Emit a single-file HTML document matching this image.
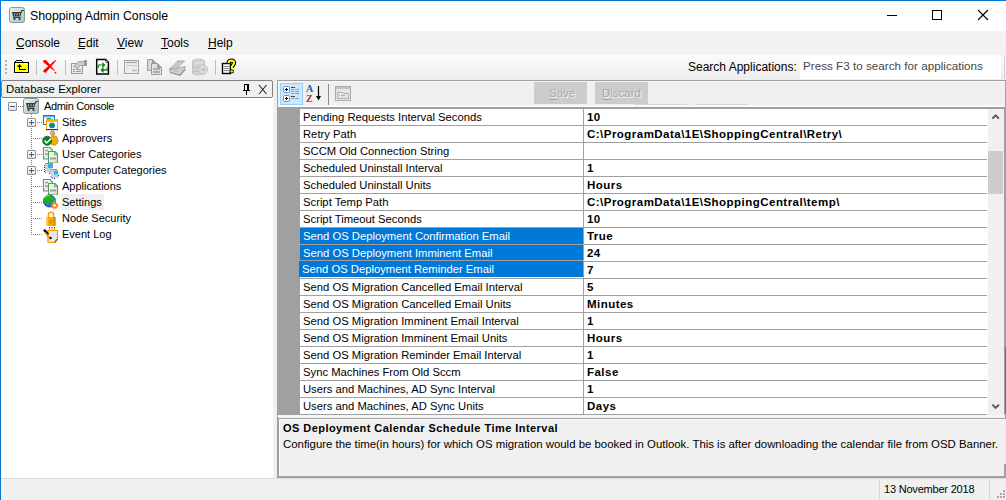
<!DOCTYPE html>
<html><head><meta charset="utf-8">
<style>
*{box-sizing:border-box;margin:0;padding:0}
html,body{width:1006px;height:500px;overflow:hidden;background:#f0f0f0;font-family:"Liberation Sans",sans-serif;color:#000}
.a{position:absolute}
.t{position:absolute;white-space:nowrap;line-height:16px}
.g{position:absolute;white-space:nowrap;line-height:16px;font-size:11.25px}
.tr{position:absolute;white-space:nowrap;line-height:16px;font-size:11px}
.b{font-weight:bold;font-size:11.5px;letter-spacing:0.47px}
u{text-decoration:none;border-bottom:1px solid #000;display:inline-block;line-height:12px}
</style></head><body>
<!-- window border -->
<div class="a" style="left:0;top:0;width:1006px;height:1px;background:#0078d7"></div>
<div class="a" style="left:0;top:0;width:1px;height:500px;background:#0078d7"></div>
<!-- title bar -->
<div class="a" style="left:1px;top:1px;width:1005px;height:30px;background:#fff"></div>
<div id="title" class="t" style="left:30px;top:8px;font-size:12.3px">Shopping Admin Console</div>
<!-- menu bar -->
<div class="a" style="left:1px;top:31px;width:1005px;height:24px;background:#f2f2f2"></div>
<div class="t" style="left:16px;top:35px;font-size:12px">Console</div><div class="a" style="left:16px;top:48px;width:8px;height:1px;background:#000"></div>
<div class="t" style="left:78px;top:35px;font-size:12px">Edit</div><div class="a" style="left:78px;top:48px;width:7px;height:1px;background:#000"></div>
<div class="t" style="left:117px;top:35px;font-size:12px">View</div><div class="a" style="left:117px;top:48px;width:8px;height:1px;background:#000"></div>
<div class="t" style="left:161px;top:35px;font-size:12px">Tools</div><div class="a" style="left:161px;top:48px;width:7px;height:1px;background:#000"></div>
<div class="t" style="left:208px;top:35px;font-size:12px">Help</div><div class="a" style="left:208px;top:48px;width:8px;height:1px;background:#000"></div>
<!-- toolbar -->
<div class="a" style="left:1px;top:55px;width:1005px;height:25px;background:linear-gradient(#fbfbfb,#ededed)"></div>
<div class="a" style="left:273px;top:80px;width:4px;height:1px;background:#f0f0f0"></div>
<div class="t" style="left:688px;top:59px;font-size:12px">Search Applications:</div>
<div class="a" style="left:800px;top:56px;width:201px;height:23px;background:#fff"></div>
<div class="t" style="left:803px;top:58px;font-size:11.7px;color:#464646">Press F3 to search for applications</div>
<!-- left panel -->
<!--PANELBG-->
<div class="a" style="left:1px;top:81px;width:272px;height:397px;background:#fff"></div>
<div class="a" style="left:1px;top:80px;width:272px;height:18px;background:#f0f0f0;border:1px solid #828282;border-radius:2px"></div>
<div class="t" style="left:6px;top:81px;font-size:11.44px">Database Explorer</div>
<!-- right panel -->
<div class="a" style="left:277px;top:80px;width:729px;height:397px;border:1px solid #a0a0a0;background:#f0f0f0"></div>
<!-- grid -->
<div class="a" style="left:278px;top:105px;width:726px;height:2px;background:#fafafa"></div>
<div class="a" style="left:278px;top:81px;width:726px;height:1px;background:#f7f7f7"></div>
<div class="a" style="left:278px;top:107px;width:726px;height:2px;background:#a0a0a0"></div>
<div class="a" style="left:278px;top:109px;width:22px;height:306px;background:#a0a0a0"></div>
<div id="grid" class="a" style="left:300px;top:109px;width:688px;height:306px;background:#fff"></div>
<div class="a" style="left:300px;top:125px;width:687px;height:1px;background:#a0a0a0"></div>
<div class="g" style="left:303px;top:109px;color:#000">Pending Requests Interval Seconds</div>
<div class="g b" style="left:587px;top:109px">10</div>
<div class="a" style="left:300px;top:142px;width:687px;height:1px;background:#a0a0a0"></div>
<div class="g" style="left:303px;top:126px;color:#000">Retry Path</div>
<div class="g b" style="left:587px;top:126px">C:\ProgramData\1E\ShoppingCentral\Retry\</div>
<div class="a" style="left:300px;top:159px;width:687px;height:1px;background:#a0a0a0"></div>
<div class="g" style="left:303px;top:143px;color:#000">SCCM Old Connection String</div>
<div class="a" style="left:300px;top:176px;width:687px;height:1px;background:#a0a0a0"></div>
<div class="g" style="left:303px;top:160px;color:#000">Scheduled Uninstall Interval</div>
<div class="g b" style="left:587px;top:160px">1</div>
<div class="a" style="left:300px;top:193px;width:687px;height:1px;background:#a0a0a0"></div>
<div class="g" style="left:303px;top:177px;color:#000">Scheduled Uninstall Units</div>
<div class="g b" style="left:587px;top:177px">Hours</div>
<div class="a" style="left:300px;top:210px;width:687px;height:1px;background:#a0a0a0"></div>
<div class="g" style="left:303px;top:194px;color:#000">Script Temp Path</div>
<div class="g b" style="left:587px;top:194px">C:\ProgramData\1E\ShoppingCentral\temp\</div>
<div class="a" style="left:300px;top:227px;width:687px;height:1px;background:#a0a0a0"></div>
<div class="g" style="left:303px;top:211px;color:#000">Script Timeout Seconds</div>
<div class="g b" style="left:587px;top:211px">10</div>
<div class="a" style="left:300px;top:228px;width:283px;height:16px;background:#0078d7"></div>
<div class="a" style="left:300px;top:244px;width:687px;height:1px;background:#a0a0a0"></div>
<div class="g" style="left:303px;top:228px;color:#fff">Send OS Deployment Confirmation Email</div>
<div class="g b" style="left:587px;top:228px">True</div>
<div class="a" style="left:300px;top:245px;width:283px;height:15px;background:#0078d7"></div>
<div class="a" style="left:300px;top:260px;width:283px;height:1px;background:#a0a0a0"></div>
<div class="a" style="left:584px;top:261px;width:403px;height:1px;background:#a0a0a0"></div>
<div class="g" style="left:303px;top:245px;color:#fff">Send OS Deployment Imminent Email</div>
<div class="g b" style="left:587px;top:245px">24</div>
<div class="a" style="left:299px;top:261px;width:284px;height:16px;background:#0078d7"></div>
<div class="a" style="left:300px;top:278px;width:687px;height:1px;background:#a0a0a0"></div>
<div class="g" style="left:302px;top:261px;color:#fff">Send OS Deployment Reminder Email</div>
<div class="g b" style="left:587px;top:262px">7</div>
<div class="a" style="left:300px;top:295px;width:687px;height:1px;background:#a0a0a0"></div>
<div class="g" style="left:303px;top:279px;color:#000">Send OS Migration Cancelled Email Interval</div>
<div class="g b" style="left:587px;top:279px">5</div>
<div class="a" style="left:300px;top:312px;width:687px;height:1px;background:#a0a0a0"></div>
<div class="g" style="left:303px;top:296px;color:#000">Send OS Migration Cancelled Email Units</div>
<div class="g b" style="left:587px;top:296px">Minutes</div>
<div class="a" style="left:300px;top:329px;width:687px;height:1px;background:#a0a0a0"></div>
<div class="g" style="left:303px;top:313px;color:#000">Send OS Migration Imminent Email Interval</div>
<div class="g b" style="left:587px;top:313px">1</div>
<div class="a" style="left:300px;top:346px;width:687px;height:1px;background:#a0a0a0"></div>
<div class="g" style="left:303px;top:330px;color:#000">Send OS Migration Imminent Email Units</div>
<div class="g b" style="left:587px;top:330px">Hours</div>
<div class="a" style="left:300px;top:363px;width:687px;height:1px;background:#a0a0a0"></div>
<div class="g" style="left:303px;top:347px;color:#000">Send OS Migration Reminder Email Interval</div>
<div class="g b" style="left:587px;top:347px">1</div>
<div class="a" style="left:300px;top:380px;width:687px;height:1px;background:#a0a0a0"></div>
<div class="g" style="left:303px;top:364px;color:#000">Sync Machines From Old Sccm</div>
<div class="g b" style="left:587px;top:364px">False</div>
<div class="a" style="left:300px;top:397px;width:687px;height:1px;background:#a0a0a0"></div>
<div class="g" style="left:303px;top:381px;color:#000">Users and Machines, AD Sync Interval</div>
<div class="g b" style="left:587px;top:381px">1</div>
<div class="a" style="left:300px;top:414px;width:687px;height:1px;background:#a0a0a0"></div>
<div class="g" style="left:303px;top:398px;color:#000">Users and Machines, AD Sync Units</div>
<div class="g b" style="left:587px;top:398px">Days</div>
<div class="a" style="left:583px;top:109px;width:1px;height:306px;background:#a0a0a0"></div>
<!-- scrollbar -->
<div class="a" style="left:988px;top:109px;width:16px;height:306px;background:#f0f0f0"></div>
<div class="a" style="left:988px;top:151px;width:15px;height:43px;background:#cdcdcd"></div>
<div class="a" style="left:1004px;top:107px;width:2px;height:308px;background:#a0a0a0"></div>
<!-- description -->
<div class="a" style="left:278px;top:415px;width:726px;height:3px;background:#f5f5f5"></div><div class="a" style="left:277px;top:418px;width:729px;height:60px;border-top:1px solid #a0a0a0;border-left:2px solid #a0a0a0;border-bottom:2px solid #a0a0a0;background:#f0f0f0;box-shadow:inset 1px 1px 0 #fafafa"></div>
<div class="t" style="left:283px;top:420px;font-size:11px;font-weight:bold;letter-spacing:0.45px">OS Deployment Calendar Schedule Time Interval</div>
<div class="t" style="left:283px;top:436px;font-size:11.4px">Configure the time(in hours) for which OS migration would be booked in Outlook. This is after downloading the calendar file from OSD Banner.</div>
<!-- status bar -->
<div class="a" style="left:1px;top:478px;width:1005px;height:1px;background:#dadada"></div>
<div class="a" style="left:879px;top:480px;width:1px;height:19px;background:#d6d6d6"></div>
<div class="a" style="left:989px;top:480px;width:1px;height:19px;background:#d6d6d6"></div>
<div class="t" style="left:884px;top:481px;font-size:11px;letter-spacing:-0.2px">13 November 2018</div>
<!-- window controls -->
<div class="a" style="left:887px;top:15px;width:10px;height:1px;background:#000"></div>
<div class="a" style="left:932px;top:10px;width:10px;height:10px;border:1px solid #000"></div>
<svg class="a" style="left:977px;top:9px" width="12" height="12" viewBox="0 0 12 12"><path d="M1 1L11 11M11 1L1 11" stroke="#000" stroke-width="1.1"/></svg>
<!-- app icon -->
<svg class="a" style="left:9px;top:7px" width="16" height="16" viewBox="0 0 16 16">
<defs><linearGradient id="ag" x1="0" y1="0" x2="1" y2="1"><stop offset="0" stop-color="#e9f2f2"/><stop offset="1" stop-color="#a7c3c3"/></linearGradient></defs>
<rect x="0.5" y="0.5" width="15" height="15" rx="2" fill="url(#ag)" stroke="#7e9e9e"/>
<path d="M3 5h9.5l-1 4.5h-7.5z" fill="#3a3a3a"/>
<path d="M5.5 6v2.5M8 6v2.5M10.5 6v2.5" stroke="#b8cccc" stroke-width="0.8"/>
<path d="M12 5.5l1-2h2" stroke="#3a3a3a" stroke-width="1.2" fill="none"/>
<path d="M4.5 9.5v1h7" stroke="#3a3a3a" fill="none"/>
<circle cx="5.5" cy="12" r="1.1" fill="#2a2a2a"/><circle cx="10.5" cy="12" r="1.1" fill="#2a2a2a"/>
</svg>
<!-- toolbar grip -->
<div class="a" style="left:5px;top:60px;width:2px;height:2px;background:#b0b0b0"></div>
<div class="a" style="left:5px;top:64px;width:2px;height:2px;background:#b0b0b0"></div>
<div class="a" style="left:5px;top:68px;width:2px;height:2px;background:#b0b0b0"></div>
<div class="a" style="left:5px;top:72px;width:2px;height:2px;background:#b0b0b0"></div>
<!-- separators -->
<div class="a" style="left:36px;top:60px;width:1px;height:15px;background:#bdbdbd"></div>
<div class="a" style="left:65px;top:60px;width:1px;height:15px;background:#bdbdbd"></div>
<div class="a" style="left:117px;top:60px;width:1px;height:15px;background:#bdbdbd"></div>
<div class="a" style="left:215px;top:60px;width:1px;height:15px;background:#bdbdbd"></div>
<!-- folder up -->
<svg class="a" style="left:13px;top:59px" width="17" height="15" viewBox="0 0 17 15" shape-rendering="crispEdges">
<defs><pattern id="dy" width="2" height="2" patternUnits="userSpaceOnUse"><rect width="2" height="2" fill="#ffff00"/><rect x="1" y="0" width="1" height="1" fill="#fff"/><rect x="0" y="1" width="1" height="1" fill="#fff"/></pattern></defs>
<rect x="2" y="4" width="13" height="9" fill="url(#dy)"/>
<rect x="3" y="2" width="6" height="1" fill="url(#dy)"/>
<rect x="3" y="1" width="6" height="1" fill="#000"/>
<rect x="2" y="2" width="1" height="1" fill="#000"/><rect x="9" y="2" width="1" height="1" fill="#000"/>
<rect x="1" y="3" width="15" height="1" fill="#000"/>
<rect x="1" y="3" width="1" height="11" fill="#000"/><rect x="15" y="3" width="1" height="11" fill="#000"/>
<rect x="1" y="13" width="15" height="1" fill="#000"/>
<path d="M6.5 5L4 8h5z" fill="#000" shape-rendering="auto"/>
<rect x="6" y="7" width="1" height="4" fill="#000"/>
<rect x="6" y="10" width="7" height="1" fill="#000"/>
</svg>
<!-- red X -->
<svg class="a" style="left:42px;top:59px" width="16" height="16" viewBox="0 0 16 16">
<path d="M1.2 1.3L4 1.1L12.9 11.4L12.3 12L1.4 3.3z" fill="#f00"/>
<circle cx="13.5" cy="13.6" r="0.9" fill="#f00"/>
<path d="M13.3 1L14 1.7L3.6 14L1.3 12.8L1.3 11.4z" fill="#f00"/>
</svg>
<!-- properties (grey) -->
<svg class="a" style="left:70px;top:59px" width="18" height="16" viewBox="0 0 18 16">
<rect x="1.5" y="4.5" width="11" height="10" fill="#ececec" stroke="#9a9a9a"/>
<path d="M3 10.5h2M6 10.5h5M3 12.5h2M6 12.5h5" stroke="#9a9a9a"/>
<path d="M3.5 7.5l5-5h6v4h-4l-3 3z" fill="#c8c8c8" stroke="#a5a5a5"/>
<rect x="14" y="1" width="3" height="6" fill="#9a9a9a"/>
</svg>
<!-- refresh doc -->
<svg class="a" style="left:95px;top:58px" width="16" height="18" viewBox="0 0 16 18">
<path d="M1.7 1.6H11L13.4 4V16H1.7Z" fill="#fff" stroke="#000" stroke-width="1.5"/>
<path d="M10.5 1.5L13.5 4.5V1.5z" fill="#fff"/>
<path d="M10.8 1.8L13.4 4.4" stroke="#000" stroke-width="1.3"/>
<circle cx="11.6" cy="3.6" r="0.9" fill="#fff" stroke="#000" stroke-width="0.6"/>
<path d="M3.3 9.8V7H7.8" stroke="#0a8a0a" stroke-width="1.3" fill="none" stroke-dasharray="2.2 0.8"/>
<path d="M7.3 4L10.5 7L7.3 10z" fill="#0a8a0a"/>
<path d="M12.2 9.2V12H8" stroke="#0a8a0a" stroke-width="1.3" fill="none"/>
<path d="M8.6 9L5.3 12L8.6 15z" fill="#0a8a0a"/>
</svg>
<!-- window (grey) -->
<svg class="a" style="left:124px;top:60px" width="15" height="14" viewBox="0 0 15 14">
<rect x="0.5" y="0.5" width="14" height="13" fill="#ececec" stroke="#a3a3a3"/>
<path d="M2 2.5h11" stroke="#aaa" stroke-width="1.2"/><path d="M2 5.5h11" stroke="#c8c8c8"/>
<path d="M8 10.5h5" stroke="#bbb" stroke-width="1.5"/>
</svg>
<!-- copy (grey) -->
<svg class="a" style="left:146px;top:58px" width="17" height="18" viewBox="0 0 17 18">
<path d="M1.5 1.5h5l3 3v8h-8z" fill="#d6d6d6" stroke="#9c9c9c"/>
<path d="M6.5 1.5v3h3z" fill="#a5a5a5" stroke="#9c9c9c"/>
<path d="M3 6h2M3 9h4" stroke="#eee"/>
<path d="M5.5 5.5h6l4 4v7h-10z" fill="#e2e2e2" stroke="#9c9c9c"/>
<path d="M11.5 5.5v4h4z" fill="#a5a5a5" stroke="#9c9c9c"/>
<rect x="7" y="10" width="7" height="2" fill="#ababab"/><rect x="7" y="13" width="7" height="2" fill="#ababab"/>
</svg>
<!-- scanner (grey) -->
<svg class="a" style="left:168px;top:58px" width="19" height="18" viewBox="0 0 19 18">
<path d="M1.5 11l8-8h7l-7.5 7.5z" fill="#c9c9c9" stroke="#a3a3a3"/>
<path d="M2.5 9.5l6.5-6M16 4l-6 6" stroke="#e2e2e2" stroke-width="0.8"/>
<path d="M1.5 11.5l7.5-1 8-2v3.5l-5 5.5-9.5-3z" fill="#d2d2d2" stroke="#a3a3a3"/>
<path d="M2 14.5l10 2.5 5-5.5" stroke="#9a9a9a" stroke-width="1.2" fill="none"/>
<path d="M6 13h5M13 12h2" stroke="#b5b5b5"/>
</svg>
<!-- database (grey) -->
<svg class="a" style="left:191px;top:58px" width="19" height="18" viewBox="0 0 19 18">
<path d="M1.5 3c0-2.5 12-2.5 12 0v12c0 2.5-12 2.5-12 0z" fill="#d3d3d3" stroke="#c3c3c3"/>
<path d="M1.5 8c0 2 12 2 12 0M1.5 12c0 2 12 2 12 0" stroke="#bdbdbd" fill="none"/>
<path d="M3 4.5c2 1 7 1 9 0" stroke="#e8e8e8" fill="none"/>
<circle cx="12" cy="11.5" r="4.5" fill="#dedede" stroke="#c0c0c0"/>
<path d="M9.5 11.5h4M12 9.5l2 2-2 2" stroke="#b8b8b8" fill="none"/>
</svg>
<!-- help -->
<svg class="a" style="left:221px;top:58px" width="17" height="17" viewBox="0 0 17 17">
<rect x="1.5" y="5.5" width="8" height="10" fill="#fff" stroke="#000" stroke-width="1.4"/>
<path d="M3 8.5h5M3 10.5h5M3 12.5h5" stroke="#8a8a8a"/>
<path d="M7.5 5C8 1.8 13.5 1.8 13 5.2C12.7 7 10.6 7.5 10.6 10" stroke="#000" stroke-width="4.2" fill="none"/>
<path d="M7.5 5C8 1.8 13.5 1.8 13 5.2C12.7 7 10.6 7.5 10.6 10" stroke="#ff0" stroke-width="2.1" fill="none"/>
<rect x="8.6" y="11.6" width="4" height="3.6" fill="#000"/>
<rect x="9.5" y="12.4" width="2.3" height="2" fill="#ff0"/>
</svg>
<!-- left panel header icons -->
<svg class="a" style="left:242px;top:84px" width="9" height="11" viewBox="0 0 9 11" shape-rendering="crispEdges">
<rect x="2" y="0" width="5" height="1" fill="#000"/>
<rect x="2" y="1" width="1" height="5" fill="#000"/>
<rect x="5" y="1" width="2" height="5" fill="#000"/>
<rect x="1" y="6" width="7" height="1" fill="#000"/>
<rect x="4" y="7" width="1" height="4" fill="#000"/>
</svg>
<svg class="a" style="left:258px;top:84px" width="10" height="11" viewBox="0 0 10 11">
<path d="M1 1L8.5 10M8.5 1L1 10" stroke="#1e1e1e" stroke-width="1.05"/>
</svg>
<!-- right panel toolbar -->
<div class="a" style="left:280px;top:83px;width:23px;height:22px;background:#cce8ff;border:1px solid #99d1ff"></div>
<svg class="a" style="left:283px;top:86px" width="18" height="16" viewBox="0 0 18 16">
<rect x="0.5" y="0.5" width="6" height="6" rx="1" fill="#fff" stroke="#5a96dc"/>
<rect x="2" y="3" width="3" height="1" fill="#000"/><rect x="3" y="2" width="1" height="3" fill="#000"/>
<rect x="0.5" y="9.5" width="6" height="6" rx="1" fill="#fff" stroke="#5a96dc"/>
<rect x="2" y="12" width="3" height="1" fill="#000"/><rect x="3" y="11" width="1" height="3" fill="#000"/>
<path d="M8 1.5h4M8 10.5h4" stroke="#444"/>
<path d="M8 3.5h2M12 3.5h2M8 5.5h2M12 5.5h2M8 7.5h2M12 7.5h2M8 12.5h2M12 12.5h2" stroke="#a898c8"/>
<path d="M10 3.5h1M14 3.5h2M10 5.5h1M14 5.5h2M10 7.5h1M14 7.5h2M10 12.5h1M14 12.5h2" stroke="#60a898"/>
</svg>
<div class="a" style="left:306px;top:85px;font-family:'Liberation Serif',serif;font-weight:bold;font-size:10px;line-height:8px;color:#2a4fc0">A</div>
<div class="a" style="left:306px;top:94px;font-family:'Liberation Serif',serif;font-weight:bold;font-size:10px;line-height:9px;color:#b03030">Z</div>
<svg class="a" style="left:313px;top:85px" width="10" height="17" viewBox="0 0 10 17">
<path d="M5.5 1v12" stroke="#000" stroke-width="1.2"/>
<path d="M3 11l2.5 4.5 2.5-4.5z" fill="#000"/>
</svg>
<div class="a" style="left:328px;top:84px;width:1px;height:21px;background:#8a8a8a"></div>
<svg class="a" style="left:334px;top:85px" width="18" height="17" viewBox="0 0 18 17">
<rect x="1.5" y="1.5" width="15" height="14" fill="#e6e6e6" stroke="#aaa"/>
<path d="M2 3h14" stroke="#bbb" stroke-width="1.5"/>
<path d="M3.5 7.5h5l1 1h5v5h-11z" fill="none" stroke="#b0b0b0"/>
<path d="M5 10.5h1M7 10.5h4" stroke="#aaa"/>
</svg>
<!-- Save / Discard -->
<div class="a" style="left:534px;top:82px;width:53px;height:22px;background:#cccccc"></div>
<div class="a" style="left:595px;top:82px;width:53px;height:22px;background:#cccccc"></div>
<div class="t" style="left:549px;top:85px;font-size:11.5px;color:#a8a8a8;text-shadow:1px 1px 0 #f4f4f4">Save</div>
<div class="a" style="left:549px;top:99px;width:8px;height:1px;background:#a8a8a8"></div>
<div class="t" style="left:602px;top:85px;font-size:11.5px;color:#a8a8a8;text-shadow:1px 1px 0 #f4f4f4">Discard</div>
<div class="a" style="left:602px;top:99px;width:9px;height:1px;background:#a8a8a8"></div>
<div class="a" style="left:634px;top:104px;width:53px;height:1px;background:#d6d6d6"></div>
<div class="a" style="left:695px;top:104px;width:53px;height:1px;background:#d6d6d6"></div>
<!-- scroll arrows -->
<svg class="a" style="left:991px;top:112px" width="10" height="8" viewBox="0 0 10 8"><path d="M1.3 6.6L4.6 3.3L7.9 6.6" stroke="#5a5a5a" stroke-width="2" fill="none"/></svg>
<svg class="a" style="left:991px;top:403px" width="10" height="8" viewBox="0 0 10 8"><path d="M1.3 1.6L4.6 4.9L7.9 1.6" stroke="#5a5a5a" stroke-width="2" fill="none"/></svg>
<!-- size grip -->
<div class="a" style="left:1003px;top:490px;width:2px;height:2px;background:#a8a8a8"></div>
<div class="a" style="left:1000px;top:493px;width:2px;height:2px;background:#a8a8a8"></div>
<div class="a" style="left:1003px;top:493px;width:2px;height:2px;background:#a8a8a8"></div>
<div class="a" style="left:997px;top:496px;width:2px;height:2px;background:#a8a8a8"></div>
<div class="a" style="left:1000px;top:496px;width:2px;height:2px;background:#a8a8a8"></div>
<div class="a" style="left:1003px;top:496px;width:2px;height:2px;background:#a8a8a8"></div>

<div class="a" style="left:1005px;top:347px;width:1px;height:66px;background:#1a7fd8"></div>
<div class="a" style="left:1004px;top:464px;width:2px;height:13px;background:#a0a0a0"></div>
<div class="a" style="left:1004px;top:55px;width:1px;height:24px;background:#d2d2d2"></div>

<div class="a" style="left:61px;top:194px;width:43px;height:16px;background:#f0f0f0"></div>
<div class="a" style="left:8px;top:102px;width:9px;height:9px;border:1px solid #8e8f8f;border-radius:1px;background:linear-gradient(#fff,#e3e3e3)"></div><div class="a" style="left:10px;top:106px;width:5px;height:1px;background:#3b5aa0"></div>
<div class="a" style="left:18px;top:106px;width:5px;height:1px;background:repeating-linear-gradient(90deg,#808080 0 1px,transparent 1px 2px)"></div>
<div class="a" style="left:31px;top:114px;width:1px;height:121px;background:repeating-linear-gradient(180deg,#808080 0 1px,transparent 1px 2px)"></div>
<div class="a" style="left:27px;top:118px;width:9px;height:9px;border:1px solid #8e8f8f;border-radius:1px;background:linear-gradient(#fff,#e3e3e3)"></div><div class="a" style="left:29px;top:122px;width:5px;height:1px;background:#3b5aa0"></div><div class="a" style="left:31px;top:120px;width:1px;height:5px;background:#3b5aa0"></div>
<div class="a" style="left:37px;top:122px;width:6px;height:1px;background:repeating-linear-gradient(90deg,#808080 0 1px,transparent 1px 2px)"></div>
<div class="tr" style="left:62px;top:114px">Sites</div>
<div class="a" style="left:33px;top:138px;width:10px;height:1px;background:repeating-linear-gradient(90deg,#808080 0 1px,transparent 1px 2px)"></div>
<div class="tr" style="left:62px;top:130px">Approvers</div>
<div class="a" style="left:27px;top:150px;width:9px;height:9px;border:1px solid #8e8f8f;border-radius:1px;background:linear-gradient(#fff,#e3e3e3)"></div><div class="a" style="left:29px;top:154px;width:5px;height:1px;background:#3b5aa0"></div><div class="a" style="left:31px;top:152px;width:1px;height:5px;background:#3b5aa0"></div>
<div class="a" style="left:37px;top:154px;width:6px;height:1px;background:repeating-linear-gradient(90deg,#808080 0 1px,transparent 1px 2px)"></div>
<div class="tr" style="left:62px;top:146px">User Categories</div>
<div class="a" style="left:27px;top:166px;width:9px;height:9px;border:1px solid #8e8f8f;border-radius:1px;background:linear-gradient(#fff,#e3e3e3)"></div><div class="a" style="left:29px;top:170px;width:5px;height:1px;background:#3b5aa0"></div><div class="a" style="left:31px;top:168px;width:1px;height:5px;background:#3b5aa0"></div>
<div class="a" style="left:37px;top:170px;width:6px;height:1px;background:repeating-linear-gradient(90deg,#808080 0 1px,transparent 1px 2px)"></div>
<div class="tr" style="left:62px;top:162px">Computer Categories</div>
<div class="a" style="left:33px;top:186px;width:10px;height:1px;background:repeating-linear-gradient(90deg,#808080 0 1px,transparent 1px 2px)"></div>
<div class="tr" style="left:62px;top:178px">Applications</div>
<div class="a" style="left:33px;top:202px;width:10px;height:1px;background:repeating-linear-gradient(90deg,#808080 0 1px,transparent 1px 2px)"></div>
<div class="tr" style="left:62px;top:194px">Settings</div>
<div class="a" style="left:33px;top:218px;width:10px;height:1px;background:repeating-linear-gradient(90deg,#808080 0 1px,transparent 1px 2px)"></div>
<div class="tr" style="left:62px;top:210px">Node Security</div>
<div class="a" style="left:33px;top:234px;width:10px;height:1px;background:repeating-linear-gradient(90deg,#808080 0 1px,transparent 1px 2px)"></div>
<div class="tr" style="left:62px;top:226px">Event Log</div>
<div class="tr" style="left:44px;top:98px;letter-spacing:-0.35px">Admin Console</div>
<!-- root cart icon -->
<svg class="a" style="left:23px;top:98px" width="16" height="16" viewBox="0 0 16 16">
<defs><linearGradient id="rg" x1="0" y1="0" x2="1" y2="1"><stop offset="0" stop-color="#eef5f5"/><stop offset="1" stop-color="#a3bfbf"/></linearGradient></defs>
<rect x="0.5" y="0.5" width="15" height="15" rx="2" fill="url(#rg)" stroke="#7c9c9c"/>
<path d="M3 5h9.5l-1 4.5h-7.5z" fill="#3a3a3a"/>
<path d="M5.5 6v2.5M8 6v2.5M10.5 6v2.5" stroke="#b8cccc" stroke-width="0.8"/>
<path d="M12 5.5l1-2h2" stroke="#3a3a3a" stroke-width="1.2" fill="none"/>
<path d="M4.5 9.5v1h7" stroke="#3a3a3a" fill="none"/>
<circle cx="5.5" cy="12" r="1.1" fill="#2a2a2a"/><circle cx="10.5" cy="12" r="1.1" fill="#2a2a2a"/>
</svg>
<svg width="0" height="0" style="position:absolute"><defs><linearGradient id="dg" x1="0" y1="0" x2="1" y2="1"><stop offset="0" stop-color="#ffffff"/><stop offset="1" stop-color="#d8d8d8"/></linearGradient></defs></svg>
<!-- sites -->
<svg class="a" style="left:42px;top:114px" width="17" height="17" viewBox="0 0 17 17">
<rect x="1.5" y="1.5" width="11" height="9" fill="#f4faff" stroke="#1a78f0"/>
<rect x="1" y="1" width="12" height="2.2" fill="#1a78f0"/>
<rect x="2" y="2" width="10" height="0.8" fill="#70b8ff"/>
<rect x="5" y="4" width="4" height="1.5" fill="#20a030"/>
<rect x="4.5" y="5.5" width="11" height="10" fill="#fff" stroke="#ffa000"/>
<rect x="4" y="5" width="12" height="2.8" fill="#ffa800"/>
<rect x="4" y="15" width="12" height="1.2" fill="#4a2a70"/>
<circle cx="10" cy="11.3" r="2.9" fill="#1a9a2a"/>
<path d="M8 12.8c0.8 1.6 3.2 1.8 4.6 0.2c0.5-1 0.3-2.2-0.4-3c-0.6 0.8-1.5 0.8-2 1.6c-0.6 0.8-1.3 1-2.2 1.2z" fill="#1a72e0"/>
</svg>
<!-- approvers -->
<svg class="a" style="left:42px;top:130px" width="17" height="17" viewBox="0 0 17 17">
<circle cx="10.5" cy="3.2" r="2.2" fill="#ffb000" stroke="#2020c0" stroke-width="0.7" stroke-dasharray="1 1"/>
<ellipse cx="12" cy="10.5" rx="4" ry="4.8" fill="#f2b000" stroke="#2020c0" stroke-width="0.7" stroke-dasharray="1 1.2"/>
<circle cx="5.2" cy="10.8" r="4.6" fill="#0a880a" stroke="#0a3a6a" stroke-width="0.6"/>
<path d="M2.6 10.6l2 2.4 4.8-4.6" stroke="#fff" stroke-width="1.5" fill="none"/>
</svg>
<!-- user categories -->
<svg class="a" style="left:42px;top:146px" width="17" height="17" viewBox="0 0 17 17">
<path d="M1.5 1.5h6.5l2.5 2.5v9h-9z" fill="url(#dg)" stroke="#52a052" stroke-width="1.1"/>
<path d="M3 4.5h3M3 8h3" stroke="#9a9a9a" stroke-width="1.6"/>
<path d="M6.5 5.5h6.5l2.5 2.5v9h-9z" fill="url(#dg)" stroke="#52a052" stroke-width="1.1"/>
<path d="M12.5 5.5v3h3z" fill="#b8dcb0" stroke="#52a052" stroke-width="0.8"/>
<path d="M8.5 6.5l3 3" stroke="#c8e6c0"/>
<path d="M8 12.5h6" stroke="#9a9a9a" stroke-width="1.8"/>
</svg>
<!-- computer categories -->
<svg class="a" style="left:42px;top:162px" width="17" height="17" viewBox="0 0 17 17">
<path d="M3 2h7v6l-2 2H3z" fill="#cfcfcf"/>
<rect x="6" y="2" width="4" height="4" fill="#22b4ff"/>
<path d="M3.5 1.5h7v5M2.5 3v7l2 1.5M7.5 10h2" stroke="#1414c8" stroke-dasharray="1 1" fill="none"/>
<path d="M9 8h7v6l-2 2H9z" fill="#d2d2d2"/>
<rect x="12" y="8.5" width="4" height="4" fill="#22b4ff"/>
<path d="M9.5 7.5h6M16.5 13v1.5l-2 1.5M13 16.5h-2l-2.5-2M7.5 12v-2" stroke="#1414c8" stroke-dasharray="1 1" fill="none"/>
</svg>
<!-- applications -->
<svg class="a" style="left:42px;top:178px" width="17" height="17" viewBox="0 0 17 17">
<path d="M1.5 1.5h6.5l2.5 2.5v9h-9z" fill="url(#dg)" stroke="#52a052" stroke-width="1.1"/>
<path d="M3 4.5h3M3 8h3" stroke="#9a9a9a" stroke-width="1.6"/>
<path d="M6.5 5.5h6.5l2.5 2.5v9h-9z" fill="url(#dg)" stroke="#52a052" stroke-width="1.1"/>
<path d="M12.5 5.5v3h3z" fill="#b8dcb0" stroke="#52a052" stroke-width="0.8"/>
<path d="M8.5 6.5l3 3" stroke="#c8e6c0"/>
<path d="M8 12.5h6" stroke="#9a9a9a" stroke-width="1.8"/>
</svg>
<!-- settings -->
<svg class="a" style="left:42px;top:194px" width="17" height="17" viewBox="0 0 17 17">
<circle cx="7.5" cy="7" r="6" fill="#1a7ad8" stroke="#10208a" stroke-width="0.8"/>
<path d="M1.6 7.5C1.2 3 5 0.8 8.5 1.2C11.5 1.6 13.2 4 13 6c-1 0.5-2.5 0-3.5 1c-1 1-0.5 2.5-2.5 3c-2 0.3-3.5-0.5-5.4-2.5z" fill="#22b022"/>
<path d="M3 4c1-2 3-2.5 4.5-2.2" stroke="#70e070" stroke-width="1.2" fill="none"/>
<path d="M10 9.5c1.5-0.5 2.8-1.8 3.2-3.5" stroke="#40d0ff" stroke-width="1.2" fill="none"/>
<circle cx="12.5" cy="11.5" r="2.2" fill="#fff" stroke="#ff8800" stroke-width="1.7"/>
<circle cx="12.5" cy="11.5" r="3.3" fill="none" stroke="#e87800" stroke-width="0.9" stroke-dasharray="1.3 1.3"/>
</svg>
<!-- node security -->
<svg class="a" style="left:42px;top:210px" width="17" height="17" viewBox="0 0 17 17">
<path d="M6.5 7.5v-3c0-3 5-3 5 0v3" stroke="#f0a000" stroke-width="1.6" fill="none"/>
<rect x="4" y="7" width="9.5" height="9" rx="0.5" fill="#f7aa00"/>
<rect x="4" y="7" width="2" height="9" fill="#ffc850"/>
<rect x="11.5" y="7" width="2" height="9" fill="#e08a00"/>
<path d="M9 10v3.5" stroke="#c07000"/>
</svg>
<!-- event log -->
<svg class="a" style="left:42px;top:226px" width="17" height="17" viewBox="0 0 17 17">
<path d="M6 4.5h9.5v9l-2.5 3h-7z" fill="#e6e6ea" stroke="#f09a00" stroke-width="1.2"/>
<path d="M7.5 1.5v3M10 1.5v3M12.5 1.5v3" stroke="#f5a000" stroke-width="1.1"/>
<path d="M7 1.5h1M9.5 1.5h1M12 1.5h1" stroke="#2a2ab0" stroke-width="1.2"/>
<path d="M1 4.5l2-1.5 4 4.5-1.5 1.5z" fill="#000"/>
<path d="M3 6.5l4 5" stroke="#f09a00" stroke-width="1.5"/>
<circle cx="8.5" cy="12" r="1.2" fill="#000"/>
<path d="M12.5 16l3-3" stroke="#2020c0"/>
</svg>

</body></html>
